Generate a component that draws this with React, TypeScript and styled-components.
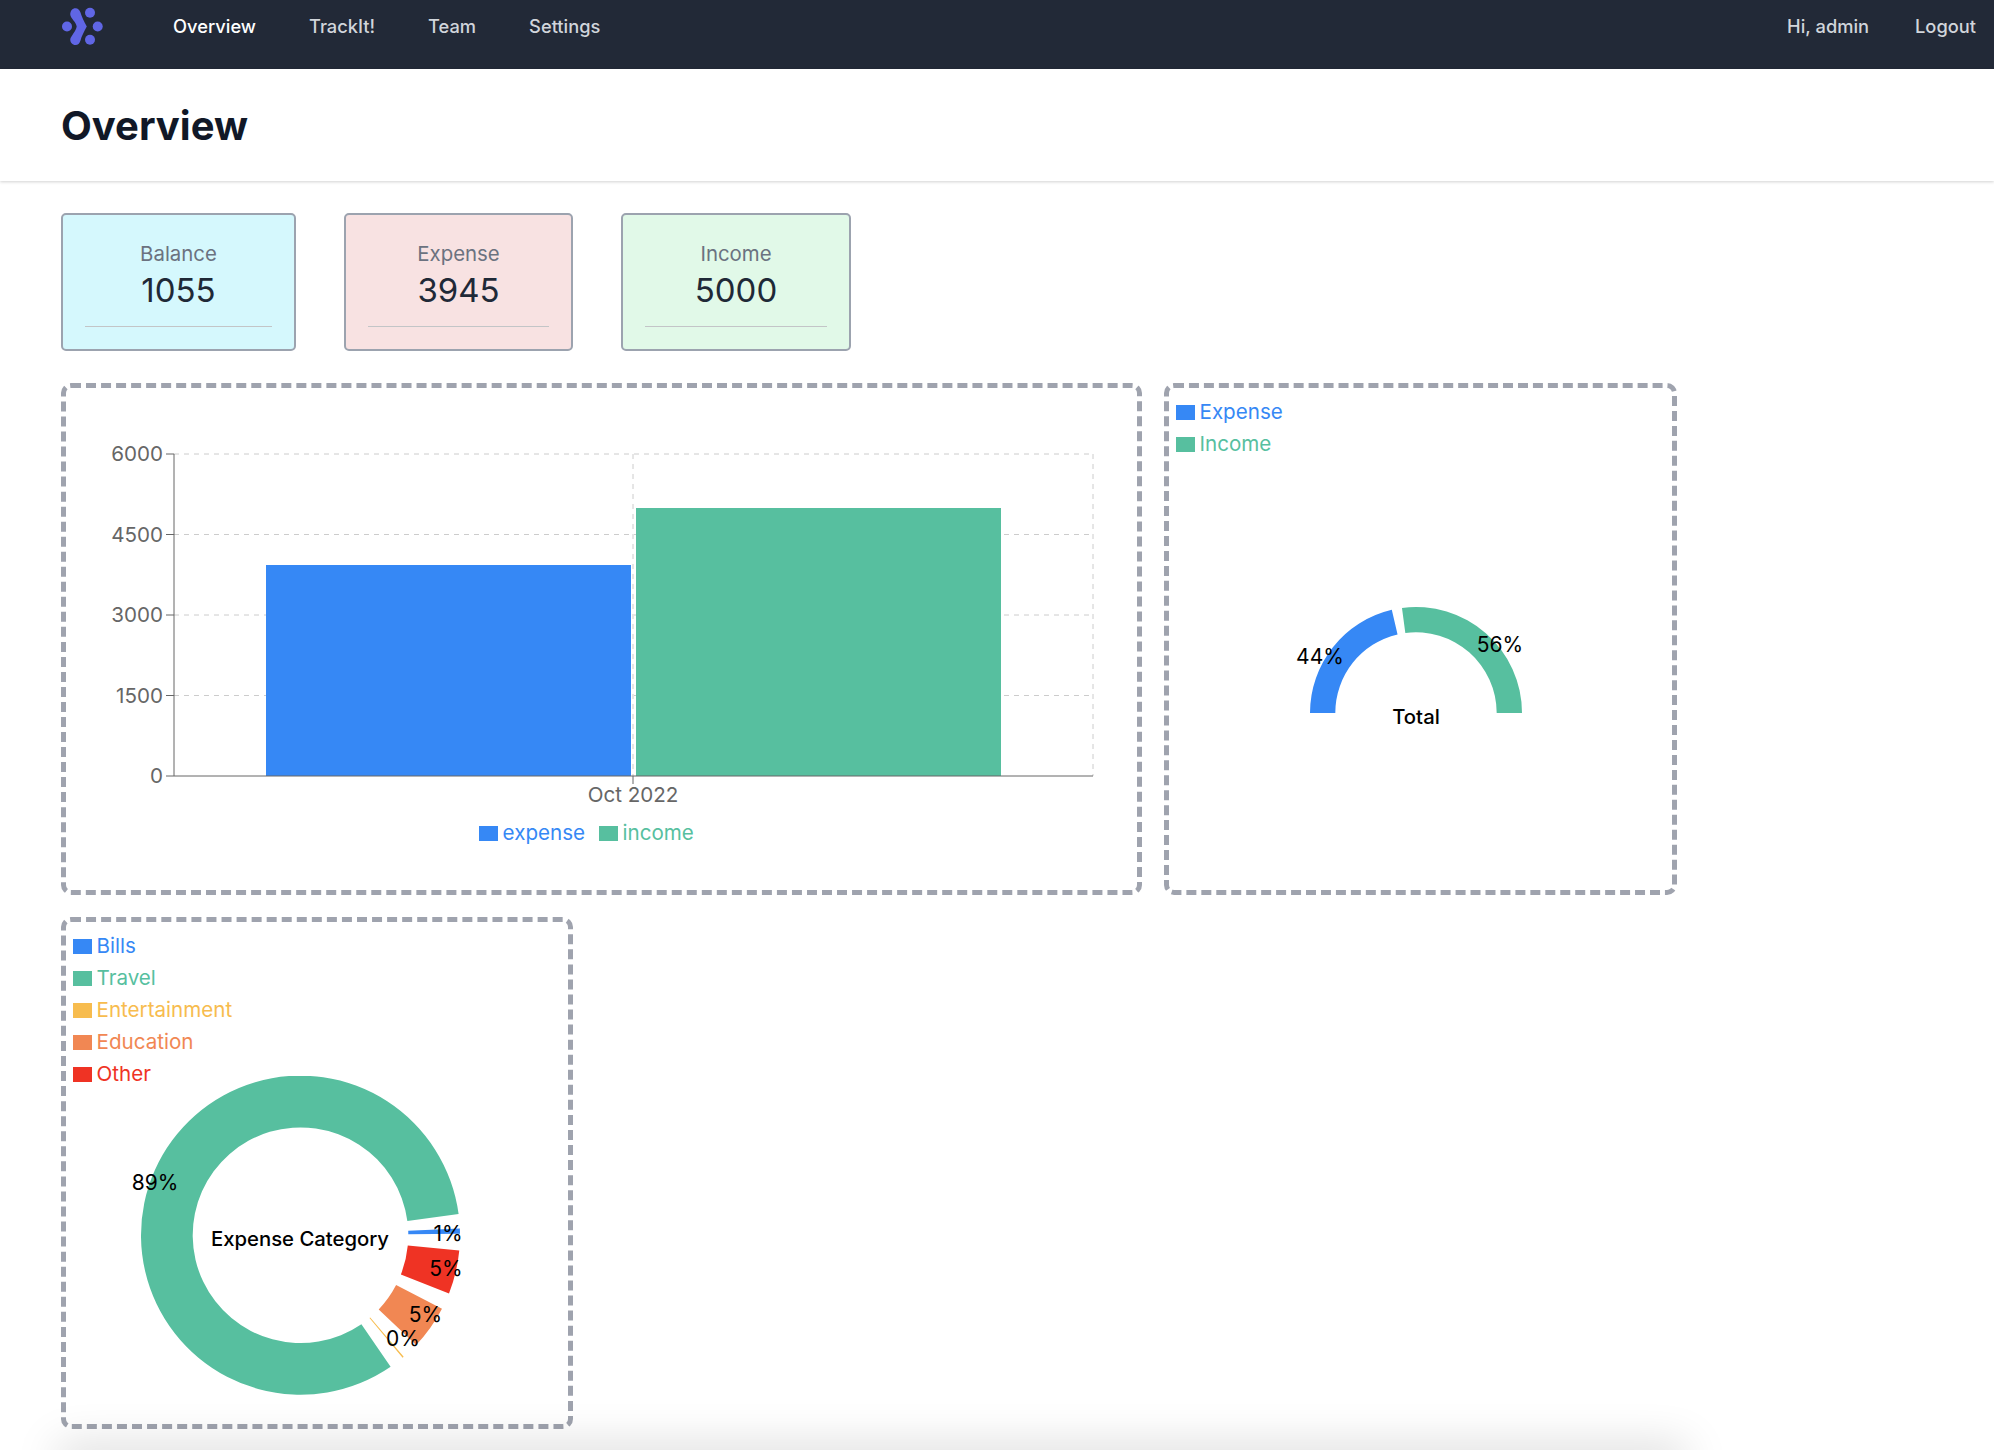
import React from "react";
import styled, { createGlobalStyle } from "styled-components";

const BLUE = "#3688f5";
const GREEN = "#57bf9f";
const YELLOW = "#f7bc4e";
const ORANGE = "#f18753";
const RED = "#ef3324";

const GlobalStyle = createGlobalStyle`
  html, body {
    margin: 0;
    height: 1450px;
    overflow: hidden;
    background: #fff;
    font-family: Inter, "Liberation Sans", sans-serif;
  }
`;

const Nav = styled.nav`
  display: flex;
  align-items: center;
  box-sizing: border-box;
  height: 69px;
  padding: 0 18px 17px 61px;
  background: #222937;
`;

const Logo = styled.svg`
  width: 42px;
  height: 40px;
  margin-right: 70px;
`;

const NavLinks = styled.div`
  display: flex;
  gap: 53px;
`;

const NavRight = styled.div`
  display: flex;
  gap: 46px;
  margin-left: auto;
`;

const NavLink = styled.a<{ $active?: boolean }>`
  font-size: 18.3px;
  font-weight: 500;
  color: ${(p) => (p.$active ? "#ffffff" : "#d1d5db")};
`;

const Header = styled.header`
  display: flex;
  align-items: center;
  box-sizing: border-box;
  height: 112px;
  padding: 0 61px;
  background: #fff;
  box-shadow: 0 1px 3px rgba(0, 0, 0, 0.18);
`;

const Title = styled.h1`
  margin: 0;
  font-size: 40px;
  font-weight: 700;
  color: #111827;
`;

const Main = styled.main`
  padding: 32px 61px 0;
`;

const StatRow = styled.div`
  display: flex;
  gap: 48px;
  margin-bottom: 32px;
`;

const StatCard = styled.div<{ $bg: string; $width: number }>`
  display: flex;
  flex-direction: column;
  align-items: stretch;
  box-sizing: border-box;
  width: ${(p) => p.$width}px;
  height: 138px;
  padding: 24px 22px 0;
  background: ${(p) => p.$bg};
  border: 2px solid #9ca3af;
  border-radius: 5px;
  text-align: center;
`;

const StatLabel = styled.div`
  font-size: 20.4px;
  line-height: 29px;
  color: #6b7280;
`;

const StatValue = styled.div`
  font-size: 33px;
  line-height: 45px;
  color: #1f2937;
`;

const StatRule = styled.div`
  height: 1px;
  margin-top: 13px;
  background: #c3c5c7;
`;

const ChartGrid = styled.div`
  display: grid;
  grid-template-columns: 1081px 513px;
  grid-auto-rows: 512px;
  gap: 22px;
`;

const ChartCard = styled.section`
  display: flex;
  flex-direction: column;
  box-sizing: border-box;
  width: 100%;
  height: 100%;
  border: 5px dashed #9fa3ae;
  border-radius: 10px;
  overflow: hidden;
`;

const SmallCard = styled(ChartCard)`
  width: 512px;
`;

const Plot = styled.svg<{ $overlap?: number }>`
  display: block;
  flex: 1;
  min-height: 0;
  width: 100%;
  margin-top: ${(p) => (p.$overlap ? -p.$overlap : 0)}px;
`;

const SideLegend = styled.ul`
  position: relative;
  z-index: 1;
  flex: none;
  margin: 0;
  padding: 7px 7px 0;
  list-style: none;
`;

const BottomLegend = styled.ul`
  display: flex;
  flex: none;
  justify-content: center;
  gap: 14px;
  margin: 0;
  padding: 0 30px 42px 0;
  list-style: none;
`;

const LegendItem = styled.li<{ $color: string }>`
  display: flex;
  align-items: center;
  gap: 5px;
  height: 32px;
  font-size: 20.6px;
  color: ${(p) => p.$color};
`;

const Swatch = styled.span<{ $color: string }>`
  width: 18.5px;
  height: 15px;
  margin-top: 2px;
  background: ${(p) => p.$color};
`;

const Tick = styled.text<{ $anchor?: string }>`
  font-size: 20.6px;
  fill: #666;
  text-anchor: ${(p) => p.$anchor || "end"};
`;

const PieLabel = styled.text`
  font-size: 21px;
  fill: #000;
  text-anchor: middle;
  dominant-baseline: central;
`;

const PieTitle = styled(PieLabel)`
  font-size: 20.3px;
  font-weight: 500;
`;

const BottomShade = styled.div`
  position: fixed;
  left: 62px;
  width: 1620px;
  top: 1450px;
  height: 20px;
  box-shadow: 0 0 44px 4px rgba(0, 0, 0, 0.17);
`;

// angles are degrees counter-clockwise from east, like the chart library's
const sector = (cx: number, cy: number, r0: number, r1: number, from: number, to: number) => {
  const pt = (r: number, a: number) => {
    const rad = (a * Math.PI) / 180;
    return `${(cx + r * Math.cos(rad)).toFixed(2)} ${(cy - r * Math.sin(rad)).toFixed(2)}`;
  };
  const large = to - from > 180 ? 1 : 0;
  return `M${pt(r1, from)}A${r1} ${r1} 0 ${large} 0 ${pt(r1, to)}L${pt(r0, to)}A${r0} ${r0} 0 ${large} 1 ${pt(r0, from)}Z`;
};

const Legend = ({ items }: { items: [string, string][] }) => (
  <SideLegend>
    {items.map(([name, color]) => (
      <LegendItem key={name} $color={color}>
        <Swatch $color={color} />
        {name}
      </LegendItem>
    ))}
  </SideLegend>
);

const BarChart = () => {
  // plot coordinates inside the card, top left is 66,388 on the page
  const left = 108;
  const right = 1027;
  const top = 66;
  const bottom = 388;
  const mid = 567;
  const ticks = [6000, 4500, 3000, 1500, 0];
  return (
    <Plot viewBox="0 0 1071 428">
      {ticks.slice(0, 4).map((t, i) => (
        <line
          key={t}
          x1={left}
          x2={right}
          y1={top + (i * (bottom - top)) / 4}
          y2={top + (i * (bottom - top)) / 4}
          stroke="#ccc"
          strokeDasharray="5 5"
        />
      ))}
      <line x1={mid} x2={mid} y1={top} y2={bottom} stroke="#ccc" strokeDasharray="5 5" />
      <line x1={right} x2={right} y1={top} y2={bottom} stroke="#ccc" strokeDasharray="5 5" />
      <rect x={200} y={177} width={365} height={211} fill={BLUE} />
      <rect x={570} y={120} width={365} height={268} fill={GREEN} />
      <line x1={left} x2={left} y1={top} y2={bottom} stroke="#666" />
      <line x1={left} x2={right} y1={bottom} y2={bottom} stroke="#666" />
      {ticks.map((t, i) => {
        const y = top + (i * (bottom - top)) / 4;
        return (
          <g key={t}>
            <line x1={left - 8} x2={left} y1={y} y2={y} stroke="#666" />
            <Tick x={left - 11} y={y + 7}>
              {t}
            </Tick>
          </g>
        );
      })}
      <line x1={mid} x2={mid} y1={bottom} y2={bottom + 8} stroke="#666" />
      <Tick $anchor="middle" x={mid} y={bottom + 26}>
        Oct 2022
      </Tick>
    </Plot>
  );
};

const GaugeChart = () => {
  // svg origin is 1169,459 on the page, right under the legend
  const cx = 247;
  const cy = 254;
  return (
    <Plot viewBox="0 0 503 431">
      <path d={sector(cx, cy, 80.7, 106, 103.2, 180)} fill={BLUE} />
      <path d={sector(cx, cy, 80.7, 106, 0, 97.6)} fill={GREEN} />
      <PieLabel x={151} y={197.5}>44%</PieLabel>
      <PieLabel x={331} y={185.5}>56%</PieLabel>
      <PieTitle x={247} y={257}>Total</PieTitle>
    </Plot>
  );
};

const DonutChart = () => {
  // 13px overlap with the legend, svg origin is 66,1076 on the page
  const cx = 234.5;
  const cy = 159.2;
  const r0 = 107.8;
  const r1 = 159.5;
  return (
    <Plot viewBox="0 0 502 348" $overlap={13}>
      <path d={sector(cx, cy, r0, r1, 7.6, 304.4)} fill={GREEN} />
      <path d={sector(cx, cy, r0, r1, 0.5, 2.4)} fill={BLUE} />
      <path d={sector(cx, cy, r0, r1, 309.8, 310.3)} fill={YELLOW} />
      <path d={sector(cx, cy, r0, r1, 316.5, 332.5)} fill={ORANGE} />
      <path d={sector(cx, cy, r0, r1, 338.6, 354.5)} fill={RED} />
      <PieLabel x={89} y={106}>89%</PieLabel>
      <PieLabel x={382} y={157}>1%</PieLabel>
      <PieLabel x={380} y={192}>5%</PieLabel>
      <PieLabel x={359.5} y={238}>5%</PieLabel>
      <PieLabel x={337} y={262}>0%</PieLabel>
      <PieTitle x={234} y={162}>Expense Category</PieTitle>
    </Plot>
  );
};

const App = () => (
  <>
    <GlobalStyle />
    <Nav>
      <Logo viewBox="61 6 42 40">
        <circle cx="67" cy="26.5" r="5" fill="#6066e5" />
        <circle cx="90" cy="12.8" r="5" fill="#6066e5" />
        <circle cx="97.7" cy="26.5" r="5" fill="#6066e5" />
        <circle cx="90" cy="39.8" r="5" fill="#6066e5" />
        <path
          d="M70.3 15C70 11 72.5 8.3 75.5 8.3C78 8.3 79.5 10 80.5 12.5C81.5 16 84 21.5 86.8 26.5C84 31.5 81.5 36.5 80.5 40.5C79.5 43.5 78 45 75.5 45C72.5 45 70 42.5 70.3 39C71 36 76 31 76.7 26.5C76 22 71 18.5 70.3 15Z"
          fill="#6066e5"
        />
      </Logo>
      <NavLinks>
        <NavLink $active>Overview</NavLink>
        <NavLink>TrackIt!</NavLink>
        <NavLink>Team</NavLink>
        <NavLink>Settings</NavLink>
      </NavLinks>
      <NavRight>
        <NavLink>Hi, admin</NavLink>
        <NavLink>Logout</NavLink>
      </NavRight>
    </Nav>
    <Header>
      <Title>Overview</Title>
    </Header>
    <Main>
      <StatRow>
        <StatCard $bg="#d5f8fd" $width={235}>
          <StatLabel>Balance</StatLabel>
          <StatValue>1055</StatValue>
          <StatRule />
        </StatCard>
        <StatCard $bg="#f8e2e2" $width={229}>
          <StatLabel>Expense</StatLabel>
          <StatValue>3945</StatValue>
          <StatRule />
        </StatCard>
        <StatCard $bg="#e1f9e8" $width={230}>
          <StatLabel>Income</StatLabel>
          <StatValue>5000</StatValue>
          <StatRule />
        </StatCard>
      </StatRow>
      <ChartGrid>
        <ChartCard>
          <BarChart />
          <BottomLegend>
            <LegendItem $color={BLUE}>
              <Swatch $color={BLUE} />
              expense
            </LegendItem>
            <LegendItem $color={GREEN}>
              <Swatch $color={GREEN} />
              income
            </LegendItem>
          </BottomLegend>
        </ChartCard>
        <ChartCard>
          <Legend
            items={[
              ["Expense", BLUE],
              ["Income", GREEN],
            ]}
          />
          <GaugeChart />
        </ChartCard>
        <SmallCard>
          <Legend
            items={[
              ["Bills", BLUE],
              ["Travel", GREEN],
              ["Entertainment", YELLOW],
              ["Education", ORANGE],
              ["Other", RED],
            ]}
          />
          <DonutChart />
        </SmallCard>
      </ChartGrid>
    </Main>
    <BottomShade />
  </>
);

export default App;
